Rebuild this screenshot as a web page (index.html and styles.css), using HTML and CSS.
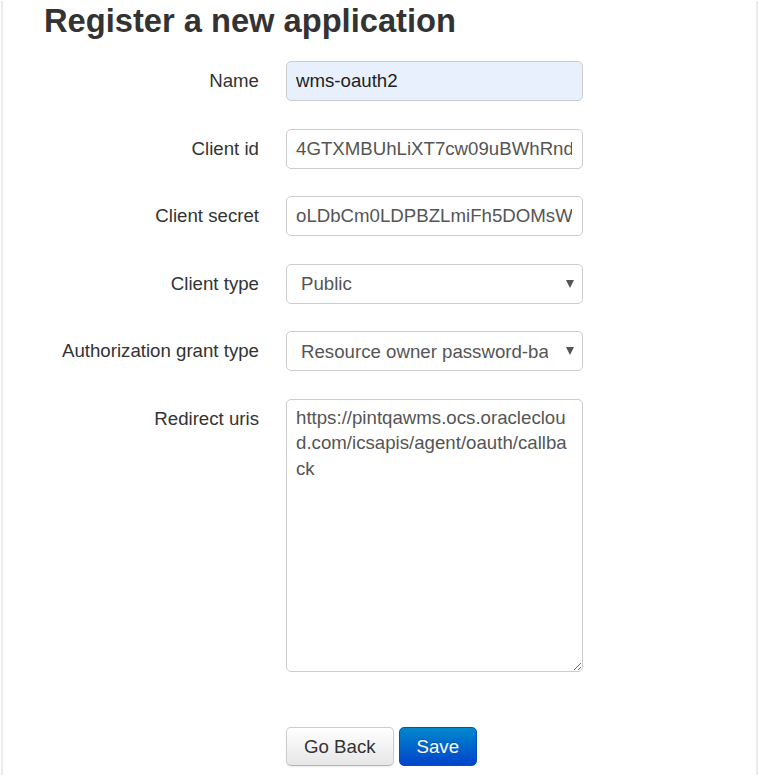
FILE: index.html
```html
<!DOCTYPE html>
<html lang="en">
<head>
<meta charset="utf-8">
<title>Register a new application</title>
<link rel="stylesheet" href="styles.css">
</head>
<body>
<div class="page">
  <div class="content">
    <h3 class="title">Register a new application</h3>
    <form class="form">
      <label class="label" for="name">Name</label>
      <div class="control"><input id="name" class="field autofill" type="text" value="wms-oauth2"></div>

      <label class="label" for="cid">Client id</label>
      <div class="control"><input id="cid" class="field" type="text" value="4GTXMBUhLiXT7cw09uBWhRndKq3"></div>

      <label class="label" for="csec">Client secret</label>
      <div class="control"><input id="csec" class="field" type="text" value="oLDbCm0LDPBZLmiFh5DOMsWx8Q"></div>

      <label class="label" for="ctype">Client type</label>
      <div class="control select-wrap">
        <select id="ctype" class="field select">
          <option>Public</option>
          <option>Confidential</option>
        </select>
      </div>

      <label class="label" for="grant">Authorization grant type</label>
      <div class="control select-wrap">
        <select id="grant" class="field select">
          <option>Resource owner password-based</option>
          <option>Authorization code</option>
        </select>
      </div>

      <label class="label" for="uris">Redirect uris</label>
      <div class="control"><textarea id="uris" class="field area">https://pintqawms.ocs.oraclecloud.com/icsapis/agent/oauth/callback</textarea></div>
    </form>
    <div class="actions">
      <button type="button" class="btn btn-default">Go Back</button>
      <button type="button" class="btn btn-primary">Save</button>
    </div>
  </div>
</div>
</body>
</html>
```
FILE: styles.css
```css
html, body {
  margin: 0;
  padding: 0;
  background: #ffffff;
}

body {
  font-family: "Liberation Sans", Arial, Helvetica, sans-serif;
  font-size: 18.67px;
  color: #333333;
}

.page {
  margin-left: 1px;
  width: 753px;
  height: 774px;
  border-left: 2px solid #ececec;
  border-right: 2px solid #ececec;
}

.content {
  padding-left: 41px;
}

.title {
  margin: 1px 0 20px 0;
  font-size: 32.67px;
  line-height: 40px;
  font-weight: bold;
  color: #333333;
}

.form {
  margin: 0 0 0 2px;
  display: grid;
  grid-template-columns: 213px 297px;
  column-gap: 27px;
  row-gap: 27.5px;
}

.label {
  text-align: right;
  line-height: 40px;
  color: #333333;
  white-space: nowrap;
}

.control {
  position: relative;
}

.field {
  box-sizing: border-box;
  display: block;
  width: 297px;
  height: 40px;
  margin: 0;
  padding: 0 10px 0 9px;
  border: 1px solid #cccccc;
  border-radius: 5px;
  background: #ffffff;
  font-family: "Liberation Sans", Arial, Helvetica, sans-serif;
  font-size: 18.67px;
  color: #555555;
  outline: none;
}

.autofill {
  background: #e8f0fe;
  color: #222222;
}

.select {
  -webkit-appearance: none;
  appearance: none;
  padding: 0 34px 0 14px;
}

.select-wrap::after {
  content: "";
  position: absolute;
  right: 9px;
  top: 16px;
  width: 0;
  height: 0;
  border-left: 4px solid transparent;
  border-right: 4px solid transparent;
  border-top: 8px solid #555555;
  pointer-events: none;
}

.area {
  height: 273px;
  padding: 5px 10px 5px 9px;
  line-height: 25.5px;
  resize: vertical;
  overflow: hidden;
}

.actions {
  margin: 55px 0 0 242px;
  display: flex;
  gap: 5px;
}

.btn {
  box-sizing: border-box;
  height: 39px;
  padding: 0 17px;
  border-radius: 5px;
  font-family: "Liberation Sans", Arial, Helvetica, sans-serif;
  font-size: 18.67px;
  line-height: 35px;
  cursor: pointer;
}

.btn-default {
  color: #333333;
  background: linear-gradient(to bottom, #ffffff, #e6e6e6);
  border: 1px solid #cccccc;
  border-bottom-color: #b3b3b3;
  box-shadow: inset 0 1px 0 rgba(255, 255, 255, 0.2), 0 1px 2px rgba(0, 0, 0, 0.08);
}

.btn-primary {
  color: #ffffff;
  background: linear-gradient(to bottom, #0088cc, #0044cc);
  border: 1px solid #0050c0;
  text-shadow: 0 -1px 0 rgba(0, 0, 0, 0.25);
}
```
